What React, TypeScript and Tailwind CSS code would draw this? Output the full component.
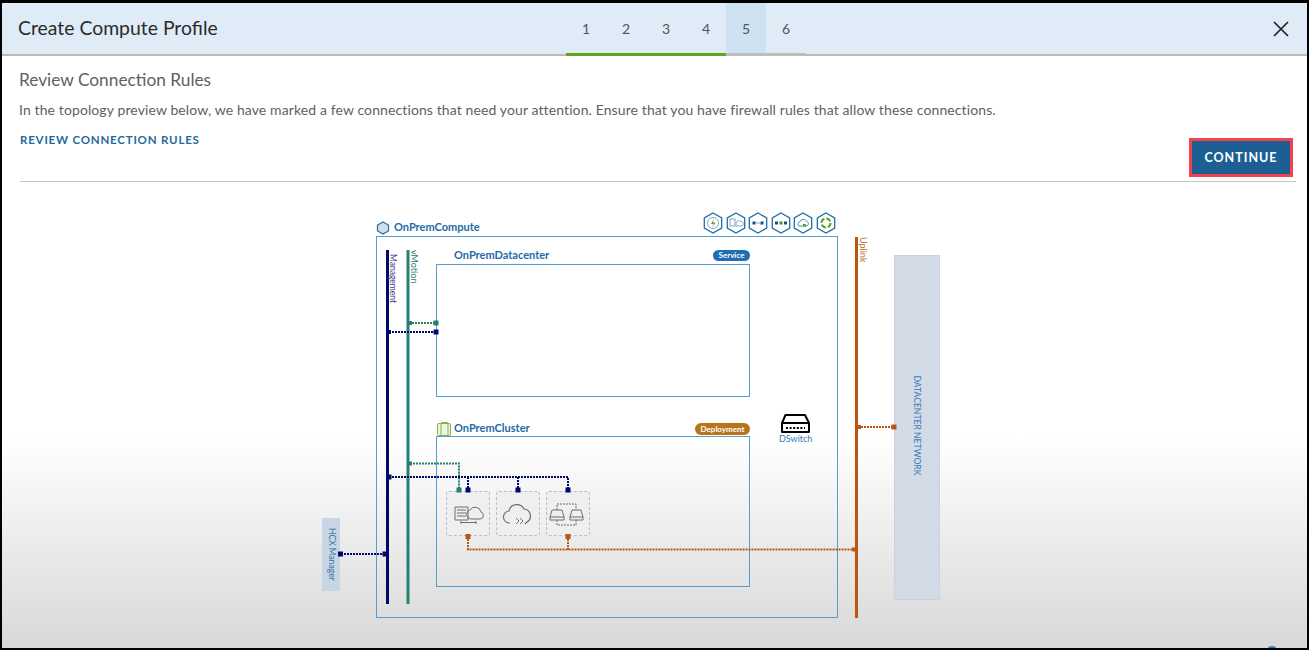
import React from "react";

const NAVY = "#00086b";
const TEAL = "#27806f";
const ORANGE = "#b9570f";

const Square = ({ x, y, c, s = 5 }: { x: number; y: number; c: string; s?: number }) => (
  <rect x={x - s / 2} y={y - s / 2} width={s} height={s} fill={c} />
);

const Dotted = ({ d, c }: { d: string; c: string }) => (
  <path d={d} fill="none" stroke={c} strokeWidth={2} strokeDasharray="2 1" />
);

// hexagon badge from the top right of the compute box
const Hex = ({ x, children }: { x: number; children?: React.ReactNode }) => (
  <g transform={`translate(${x} 223)`}>
    <path d="M0 -10 L8.7 -5 V5 L0 10 L-8.7 5 V-5 Z" fill="#fff" stroke="#1f6fa8" strokeWidth={1.3} />
    {children}
  </g>
);

const Topology = () => (
  <svg className="pointer-events-none absolute inset-0" width={1305} height={466} viewBox="2 182 1305 466">
    {/* compute icon */}
    <path d="M383 222 L388.5 225 V231 L383 234 L377.5 231 V225 Z" fill="#d5dde6" stroke="#1f6fa8" strokeWidth={1.2} />

    {/* hexagon badges */}
    <Hex x={713}>
      <circle r={5.5} fill="none" stroke="#7fa8c8" />
      <path d="M1 -4 L-2 1 H0.5 L-1 4.5 L2.5 -0.5 H0 Z" fill="#5aa02c" />
    </Hex>
    <Hex x={736}>
      <rect x={-6} y={-4} width={5} height={7} fill="none" stroke="#7fa8c8" />
      <path d="M0 3 H6 A2.4 2.4 0 0 0 5 -1.5 A3 3 0 0 0 0 0 Z" fill="none" stroke="#7fa8c8" />
    </Hex>
    <Hex x={758}>
      <rect x={-5.5} y={-1.5} width={3} height={3} fill="#1f4f80" />
      <rect x={2.5} y={-1.5} width={3} height={3} fill="#1f4f80" />
      <path d="M-2 0 H2.5" stroke="#7fa8c8" />
    </Hex>
    <Hex x={781}>
      <rect x={-6} y={-1.5} width={3} height={3} fill="#1f4f80" />
      <rect x={-1.5} y={-1.5} width={3} height={3} fill="#3f8f3a" />
      <rect x={3} y={-1.5} width={3} height={3} fill="#1f4f80" />
    </Hex>
    <Hex x={803}>
      <path d="M-4 3 H4 A2.6 2.6 0 0 0 3.6 -1.8 A3.6 3.6 0 0 0 -3 -1.2 A2.3 2.3 0 0 0 -4 3 Z" fill="none" stroke="#5f8fb0" />
      <rect x={0} y={1} width={3} height={2.5} fill="#5aa02c" />
    </Hex>
    <Hex x={826}>
      <circle r={4.5} fill="none" stroke="#5aa02c" strokeWidth={2} strokeDasharray="5 2" />
    </Hex>

    {/* cluster icon */}
    <rect x={437.5} y={423.5} width={13} height={12} rx={1} fill="#eef5e6" stroke="#7fb04a" />
    <rect x={441} y={422.5} width={7} height={13} rx={1} fill="none" stroke="#7fb04a" />

    {/* vertical networks */}
    <rect x={386} y={250} width={3} height={354} fill={NAVY} />
    <rect x={406.5} y={250} width={3} height={354} fill={TEAL} />
    <rect x={855} y={237} width={3} height={381} fill={ORANGE} />

    {/* datacenter links */}
    <Dotted d="M409 323 H436" c={TEAL} />
    <Square x={410} y={323} c={TEAL} s={4} />
    <Square x={436} y={323} c={TEAL} />
    <Dotted d="M389 332 H436" c={NAVY} />
    <Square x={389} y={332} c={NAVY} s={4} />
    <Square x={436} y={332} c={NAVY} />

    {/* cluster links */}
    <Dotted d="M410 463.5 H459 V490" c={TEAL} />
    <Square x={410} y={463.5} c={TEAL} s={4} />
    <Dotted d="M389 477 H568 V490" c={NAVY} />
    <Dotted d="M468 477 V490" c={NAVY} />
    <Dotted d="M518 477 V490" c={NAVY} />
    <Square x={389} y={477} c={NAVY} />
    <Square x={459} y={490} c={TEAL} />
    <Square x={468} y={490} c={NAVY} />
    <Square x={518} y={490} c={NAVY} />
    <Square x={568} y={490} c={NAVY} />

    {/* uplink links */}
    <Dotted d="M468 536 V549.5 H855" c={ORANGE} />
    <Dotted d="M568 536 V549.5" c={ORANGE} />
    <Square x={468} y={536.5} c={ORANGE} />
    <Square x={568} y={536.5} c={ORANGE} />
    <Square x={854} y={549.5} c={ORANGE} s={4} />
    <Dotted d="M858 427 H894" c={ORANGE} />
    <Square x={859} y={427} c={ORANGE} s={4} />
    <Square x={894} y={427} c={ORANGE} />

    {/* hcx link */}
    <Dotted d="M341 554 H386" c={NAVY} />
    <Square x={340.5} y={554} c={NAVY} />
    <Square x={385} y={554} c={NAVY} />

    {/* appliance icons */}
    <g fill="none" stroke="#6f6f6f" strokeWidth={1}>
      <path d="M455 520 V507 H468 V520 Z M457 510 H466 M457 513 H466 M457 516 H466" />
      <path d="M471 519 H480 A3.6 3.6 0 0 0 481 512 A6 6 0 0 0 470 510 A4.6 4.6 0 0 0 471 519 Z" />
      <path d="M461 522.5 H476 M461 521 V524 M476 521 V524" />
      <path d="M510 523 A6 6 0 0 1 509 511 A8 8 0 0 1 524 509 A7 7 0 0 1 527 522 L525 524" strokeWidth={1.2} />
      <path d="M516 518 L519 521 L516 524 M520 518 L523 521 L520 524" />
      <path d="M550 517 L552 510 H562 L564 517 V520 H550 Z M550 517 H564" />
      <path d="M570 517 L572 510 H581 L583 517 V520 H570 Z M570 517 H583" />
      <path d="M557 510 V504 H576 V510 M557 520 V525 H576 V520" strokeDasharray="2 1" />
    </g>

    {/* dswitch icon */}
    <path d="M785.5 415 H805 L809 423 V432 H782 V423 Z M782 423 H809" fill="#fff" stroke="#000" strokeWidth={2} strokeLinejoin="round" />
    <path d="M786 428 H805" stroke="#000" strokeWidth={2} strokeDasharray="2 1.6" />

    {/* dot at the cut bottom edge */}
    <ellipse cx={1272} cy={648} rx={4} ry={2} fill="#2f7fc4" />
  </svg>
);

const Step = ({ n, done, active }: { n: number; done?: boolean; active?: boolean }) => (
  <div
    className={`-mb-[2px] flex w-[40px] items-center justify-center border-b-[3px] text-[14px] text-[#555] ${
      done ? "border-[#62a420]" : "border-[#bdbdbd]"
    } ${active ? "bg-[#cfe2f1]" : ""}`}
  >
    {n}
  </div>
);

const ApplianceBox = () => (
  <div className="h-[45px] w-[44px] rounded-[3px] border border-dashed border-[#aebfdc] bg-[#efefef]" />
);

export default function App() {
  return (
    <div className="h-[650px] w-[1309px] overflow-hidden bg-black pt-[3px] pr-[2px] pb-[2px] pl-[2px] font-['Lato',sans-serif]">
      <div className="flex h-full flex-col bg-white">
        {/* wizard header */}
        <div className="flex h-[53px] shrink-0 items-stretch justify-between border-b-2 border-[#b9b9b9] bg-[#dfebf7]">
          <div className="flex w-[564px] items-center pb-[2px] pl-[16px] text-[19.4px] text-[#2b2b2b]">
            Create Compute Profile
          </div>
          <div className="flex">
            <Step n={1} done />
            <Step n={2} done />
            <Step n={3} done />
            <Step n={4} done />
            <Step n={5} active />
            <Step n={6} />
          </div>
          <div className="flex flex-1 items-center justify-end pr-[18px]">
            <svg width="16" height="16" viewBox="0 0 16 16" fill="none" stroke="#222" strokeWidth="1.7">
              <path d="M1 1 L15 15 M15 1 L1 15" />
            </svg>
          </div>
        </div>

        {/* step intro */}
        <div className="relative mr-[11px] ml-[18px] h-[126px] shrink-0 border-b border-[#c4c4c4]">
          <h2 className="-ml-[1px] pt-[13px] text-[17.3px] leading-[22px] text-[#5f5f5f]">Review Connection Rules</h2>
          <p className="mt-[9px] -ml-[1px] text-[14px] leading-[20px] tracking-[0.11px] text-[#5f5f5f]">
            In the topology preview below, we have marked a few connections that need your attention. Ensure that you have firewall rules that allow these connections.
          </p>
          <a className="mt-[11px] block text-[11.5px] leading-[18px] font-bold tracking-[0.8px] text-[#1f6a9c]">
            REVIEW CONNECTION RULES
          </a>
          <button className="absolute top-[82px] right-[3px] h-[39px] w-[104px] border-[3px] border-[#f2414f] bg-[#1d5f92] pt-[2px] text-[12.5px] font-bold tracking-[1px] text-white">
            CONTINUE
          </button>
        </div>

        {/* topology canvas, positions are the diagram itself */}
        <div className="relative flex-1 bg-linear-to-b from-white from-[55%] to-[#d8d8d8]">
          {/* compute */}
          <div className="absolute top-[36px] left-[374px] flex h-[400px] w-[462px] flex-col">
            <div className="flex h-[18px] shrink-0 items-center pl-[18px] text-[11px] font-bold text-[#1f6aa5]">OnPremCompute</div>
            <div className="flex-1 border border-[#5a9ccb]" />
          </div>

          {/* datacenter */}
          <div className="absolute top-[64px] left-[434px] flex h-[151px] w-[314px] flex-col">
            <div className="flex h-[18px] shrink-0 items-center justify-between pl-[18px] text-[11px] font-bold text-[#1f6aa5]">
              OnPremDatacenter
              <span className="flex h-[11px] w-[37px] items-center justify-center rounded-full bg-[#1f6db3] text-[8px] text-white">Service</span>
            </div>
            <div className="flex-1 border border-[#5a9ccb]" />
          </div>

          {/* cluster */}
          <div className="absolute top-[236px] left-[434px] flex h-[169px] w-[314px] flex-col">
            <div className="flex h-[18px] shrink-0 items-center justify-between pt-[2px] pl-[18px] text-[11px] font-bold text-[#1f6aa5]">
              OnPremCluster
              <span className="mt-[2px] flex h-[12px] w-[55px] items-center justify-center rounded-full bg-[#b8741c] text-[8px] text-white">Deployment</span>
            </div>
            <div className="flex flex-1 items-start gap-[6px] border border-[#5a9ccb] pt-[54px] pl-[9px]">
              <ApplianceBox />
              <ApplianceBox />
              <ApplianceBox />
            </div>
          </div>

          <div className="absolute top-[73px] left-[892px] flex h-[345px] w-[46px] items-center justify-center border border-[#c6d2de] bg-[#d3dce6]">
            <span className="mt-[-4px] rotate-90 text-[8.6px] whitespace-nowrap text-[#3a7ab8]">DATACENTER NETWORK</span>
          </div>
          <div className="absolute top-[336px] left-[320px] flex h-[73px] w-[18px] items-center justify-center bg-[#c6d6e4]">
            <span className="rotate-90 text-[8.5px] whitespace-nowrap text-[#3f6f9c]">HCX Manager</span>
          </div>

          <Topology />

          <span className="absolute top-[251px] left-[777px] text-[9px] leading-[12px] text-[#3a7ab8]">DSwitch</span>
          <span className="absolute top-[92px] left-[366px] w-[50px] rotate-90 text-[8.5px] leading-[10px] whitespace-nowrap text-[#3b3b80]">Management</span>
          <span className="absolute top-[79px] left-[396px] w-[32px] rotate-90 text-[9px] leading-[10px] whitespace-nowrap text-[#27806f]">vMotion</span>
          <span className="absolute top-[62px] left-[849px] w-[24px] rotate-90 text-[9px] leading-[10px] whitespace-nowrap text-[#b9701f]">Uplink</span>
        </div>
      </div>
    </div>
  );
}
